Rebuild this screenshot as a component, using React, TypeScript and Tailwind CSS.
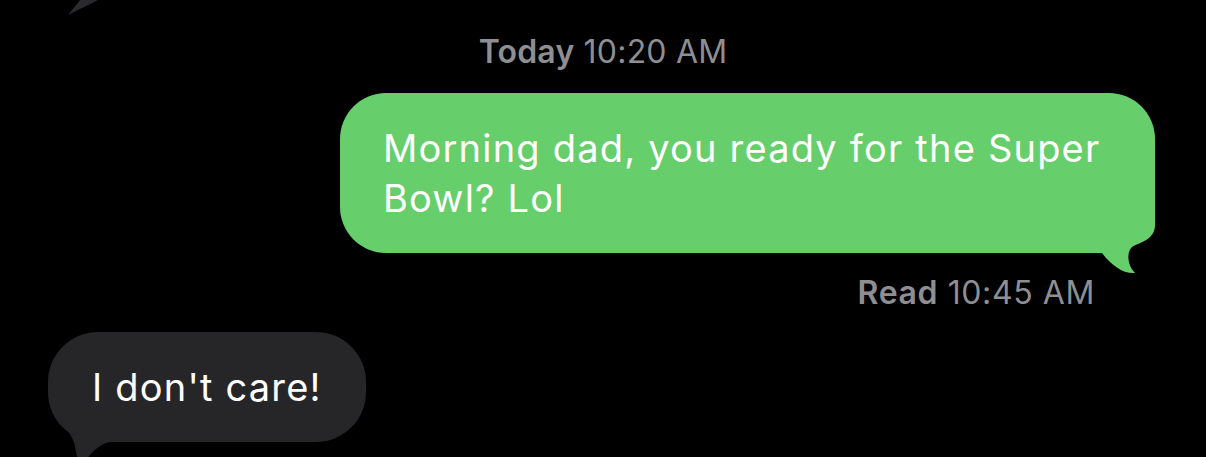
import React from "react";

export default function App() {
  return (
    <div className="w-[1206px] h-[457px] overflow-hidden bg-black font-['Inter','Liberation_Sans',sans-serif] antialiased">
      <svg width="1206" height="15" className="block">
        <path d="M68 15 C76 11, 88 5, 98 0 L80 0 C76 5, 72 10, 68 15 Z" fill="#2a2a2e" />
      </svg>

      <div className="mt-[18px] text-center text-[32px] leading-[38px] tracking-[0.2px] text-[#8e8e93]">
        <span className="font-semibold">Today</span> 10:20 AM
      </div>

      <div className="mt-[22px] flex justify-end pr-[51px]">
        <div className="relative w-[815px] rounded-[46px] bg-[#66ce6b] px-[43px] py-[30px] text-[38px] leading-[50px] tracking-[1.2px] text-white">
          <svg
            width="815"
            height="190"
            viewBox="0 0 815 190"
            className="absolute left-0 top-0 overflow-visible"
          >
            <path
              d="M700 100 L815 100 L815 132 C815 145, 803 149, 793 153 C787 157, 786 171, 795 180 C783 181, 771 172, 762 160 L700 160 Z"
              fill="#66ce6b"
            />
          </svg>
          <p className="relative">Morning dad, you ready for the Super Bowl? Lol</p>
        </div>
      </div>

      <div className="mt-[21px] flex justify-end pr-[111px] text-[32px] leading-[38px] tracking-[0.6px] text-[#8e8e93]">
        <span>
          <span className="font-semibold">Read</span> 10:45 AM
        </span>
      </div>

      <div className="mt-[20px] flex pl-[48px]">
        <div className="relative rounded-[50px] bg-[#262629] px-[44px] py-[30px] text-[38px] leading-[50px] tracking-[1.2px] text-white">
          <svg
            width="120"
            height="150"
            viewBox="0 0 120 150"
            className="absolute left-0 top-0 overflow-visible"
          >
            <path
              d="M0 55 C0 75, 20 95, 26 110 C28 118, 29 128, 33 136 C38 128, 42 122, 48 117 C52 114, 56 111, 62 110 L100 110 L100 55 Z"
              fill="#262629"
            />
          </svg>
          <p className="relative">I don't care!</p>
        </div>
      </div>
    </div>
  );
}
